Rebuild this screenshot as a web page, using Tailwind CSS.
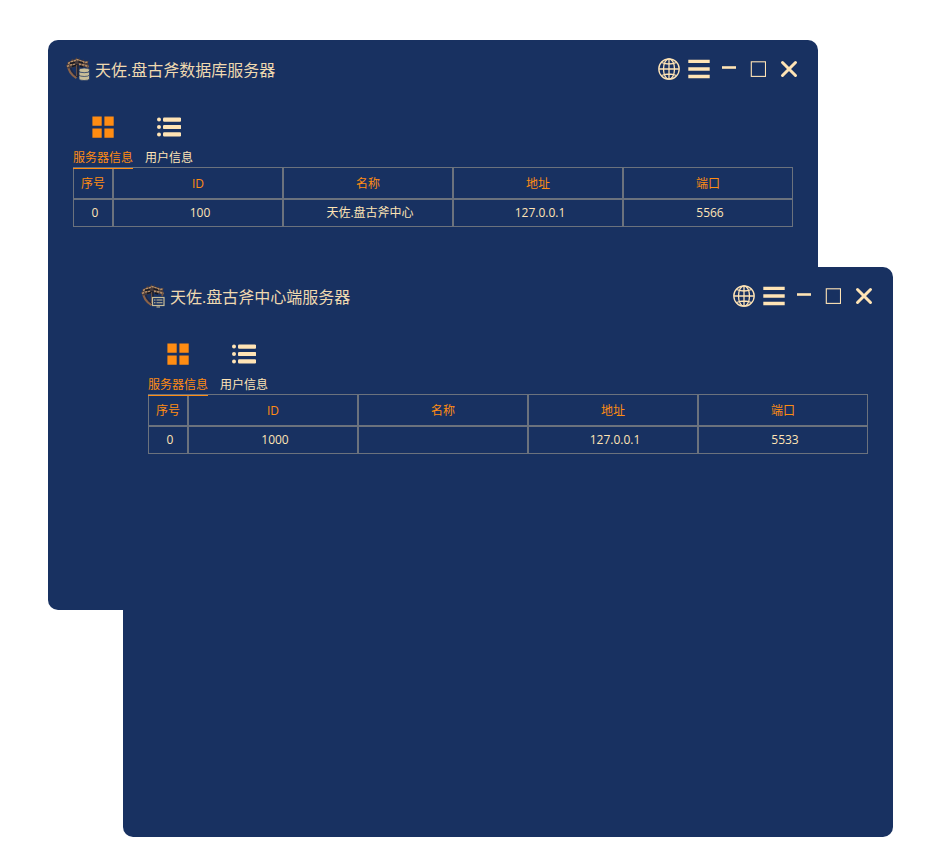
<!DOCTYPE html>
<html lang="zh-CN">
<head>
<meta charset="utf-8">
<title>天佐.盘古斧</title>
<script src="https://cdn.jsdelivr.net/npm/@tailwindcss/browser@4"></script>
</head>
<body class="relative h-[867px] w-[948px] overflow-hidden bg-white font-['Open_Sans','Noto_Sans_CJK_SC',sans-serif] text-xs text-[#ffe4b5]">

<svg class="hidden">
  <symbol id="emblem" viewBox="0 0 24 24">
    <path d="M2 8Q2.500 16.500 10.500 21" fill="none" stroke="#8b6247" stroke-width="2.200"/>
    <path d="M4 8Q5 15 10.500 19" fill="none" stroke="#24263c" stroke-width="1.300"/>
    <path d="M20.500 6Q22.500 9 21 12" fill="none" stroke="#6d5041" stroke-width="1.800"/>
    <path d="M0 9L2.500 4.500 5 4 6 1.500 8.500 3 10.500 0 11.500 2.500 13.500 1 15 3.500 17.500 2.500 19 5 23 3.500 21.500 7 23.500 9.500 18 10 15 9.500 12.500 8 9 10 6 10.500 2 11.500Z" fill="#463a3c"/>
    <path d="M2 6.500L5 4.800 8 4 11 2.500 15 4 19 5.500 21.500 5" fill="none" stroke="#b99067" stroke-width="1.500" stroke-dasharray="2.400 .7"/>
    <path d="M1 9.500L4 8 9 7.200M13 7.200L18 8 22.500 9.500" fill="none" stroke="#b18b66" stroke-width="1.700" stroke-dasharray="2.400 .7"/>
    <path d="M4 6.500L9 5.500M12.500 4.800L17 6M6 9.500L11 8M14 9L17 10" fill="none" stroke="#171821" stroke-width="1.400"/>
    <path d="M11.500 7V20" stroke="#22222e" stroke-width="2.400"/>
    <path d="M10.600 8V19" stroke="#80614e" stroke-width=".8"/>
  </symbol>
  <symbol id="globe" viewBox="0 0 22 22">
    <g fill="none" stroke="#ffe4b5" stroke-width="1.300"><circle cx="11" cy="11" r="10.200"/><ellipse cx="11" cy="11" rx="5.500" ry="10.200"/><path d="M11 1V21M1 11H21M3.500 4.500Q11 7.500 18.500 4.500M3.500 17.500Q11 14.500 18.500 17.500"/></g>
  </symbol>
  <symbol id="menu" viewBox="0 0 22 20"><path d="M.3 2.300H21.700M.3 10H21.700M.3 17.500H21.700" stroke="#ffe4b5" stroke-width="3.300"/></symbol>
  <symbol id="minus" viewBox="0 0 14 3"><path d="M0 1.500H14" stroke="#ffe4b5" stroke-width="2.600"/></symbol>
  <symbol id="square" viewBox="0 0 16 16"><rect x="1.300" y=".8" width="14.200" height="14.600" fill="none" stroke="#ffe4b5" stroke-width="1.100"/></symbol>
  <symbol id="close" viewBox="0 0 18 18"><path d="M2.500 2.500L15.500 15.500M15.500 2.500L2.500 15.500" stroke="#ffe4b5" stroke-width="3" stroke-linecap="round"/></symbol>
  <symbol id="grid" viewBox="0 0 22 22"><path d="M.4.400H9.700V9.700H.4ZM12.400.400H21.700V9.700H12.400ZM.4 12.400H9.700V21.700H.4ZM12.400 12.400H21.700V21.700H12.400Z" fill="#ff8c12"/></symbol>
  <symbol id="list" viewBox="0 0 24 20">
    <g fill="#ffe4b5"><circle cx="2" cy="2.500" r="2"/><circle cx="2" cy="10" r="2"/><circle cx="2" cy="17.500" r="2"/><rect x="6" y=".5" width="18.200" height="4.200" rx="1.200"/><rect x="6" y="7.900" width="18.200" height="4.200" rx="1.200"/><rect x="6" y="15.300" width="18.200" height="4.200" rx="1.200"/></g>
  </symbol>
</svg>

<section class="absolute left-12 top-10 h-[570px] w-[770px] rounded-[10px] bg-[#183161]">
  <header class="flex h-[58px] items-center pl-[18px] pr-5">
    <svg class="h-6 w-6 shrink-0"><use href="#emblem"/><g fill="#c9bd98" stroke="#183161" stroke-width=".7"><path d="M13 18.500H23.500V22Q22.500 23.500 18.200 23.500T13 22Z"/><path d="M13 15H23.500V18Q22.500 19.500 18.200 19.500T13 18Z"/><path d="M13 12.500Q14 11 18.200 11T23.500 12.500V14Q22.500 15.700 18.200 15.700T13 14Z"/></g></svg>
    <h1 class="ml-[5px] whitespace-nowrap pt-0.5 text-base leading-6 text-[#efd9b0]">天佐.盘古斧数据库服务器</h1>
    <div class="ml-auto flex items-center">
      <svg class="h-[22px] w-[22px]"><use href="#globe"/></svg>
      <svg class="ml-2 h-5 w-[22px]"><use href="#menu"/></svg>
      <svg class="mb-1 ml-3 h-[3px] w-3.5"><use href="#minus"/></svg>
      <svg class="ml-[14px] h-4 w-4"><use href="#square"/></svg>
      <svg class="ml-[14px] h-[18px] w-[18px]"><use href="#close"/></svg>
    </div>
  </header>
  <nav class="flex h-[69px] gap-3 pl-[25px] pt-[18px]">
    <div class="flex w-[60px] flex-col items-center text-[#ff8c12]"><svg class="h-[22px] w-[22px] shrink-0"><use href="#grid"/></svg><span class="mt-[11px] leading-[18px]">服务器信息</span></div>
    <div class="flex w-12 flex-col items-center"><svg class="mt-px h-5 w-6 shrink-0"><use href="#list"/></svg><span class="mt-3 leading-[18px]">用户信息</span></div>
  </nav>
  <div class="relative ml-[25px] w-[720px] text-center">
    <div class="grid h-8 grid-cols-[40px_repeat(4,170px)] leading-8 text-[#ff8c12] *:h-8 *:border *:border-[#6b727d]"><div>序号</div><div>ID</div><div>名称</div><div>地址</div><div>端口</div></div>
    <div class="grid h-7 grid-cols-[40px_repeat(4,170px)] leading-[26px] *:border *:border-[#6b727d] *:pl-1"><div>0</div><div>100</div><div>天佐.盘古斧中心</div><div>127.0.0.1</div><div>5566</div></div>
    <div class="absolute left-0 top-px h-px w-[60px] bg-[#ff8c12]"></div>
  </div>
</section>

<section class="absolute left-[123px] top-[267px] h-[570px] w-[770px] rounded-r-[10px] rounded-bl-[10px] bg-[#183161]">
  <header class="flex h-[58px] items-center pl-[18px] pr-5">
    <svg class="h-6 w-6 shrink-0"><use href="#emblem"/><rect x="11.500" y="13.500" width="11.500" height="8" fill="#183161" stroke="#c9bd98" stroke-width="1.200"/><path d="M13 16H14.500M15.500 16H21.500M13 18.700H14.500M15.500 18.700H21.500M15.500 23H19" stroke="#c9bd98" stroke-width="1.100"/></svg>
    <h1 class="ml-[5px] whitespace-nowrap pt-0.5 text-base leading-6 text-[#efd9b0]">天佐.盘古斧中心端服务器</h1>
    <div class="ml-auto flex items-center">
      <svg class="h-[22px] w-[22px]"><use href="#globe"/></svg>
      <svg class="ml-2 h-5 w-[22px]"><use href="#menu"/></svg>
      <svg class="mb-1 ml-3 h-[3px] w-3.5"><use href="#minus"/></svg>
      <svg class="ml-[14px] h-4 w-4"><use href="#square"/></svg>
      <svg class="ml-[14px] h-[18px] w-[18px]"><use href="#close"/></svg>
    </div>
  </header>
  <nav class="flex h-[69px] gap-3 pl-[25px] pt-[18px]">
    <div class="flex w-[60px] flex-col items-center text-[#ff8c12]"><svg class="h-[22px] w-[22px] shrink-0"><use href="#grid"/></svg><span class="mt-[11px] leading-[18px]">服务器信息</span></div>
    <div class="flex w-12 flex-col items-center"><svg class="mt-px h-5 w-6 shrink-0"><use href="#list"/></svg><span class="mt-3 leading-[18px]">用户信息</span></div>
  </nav>
  <div class="relative ml-[25px] w-[720px] text-center">
    <div class="grid h-8 grid-cols-[40px_repeat(4,170px)] leading-8 text-[#ff8c12] *:h-8 *:border *:border-[#6b727d]"><div>序号</div><div>ID</div><div>名称</div><div>地址</div><div>端口</div></div>
    <div class="grid h-7 grid-cols-[40px_repeat(4,170px)] leading-[26px] *:border *:border-[#6b727d] *:pl-1"><div>0</div><div>1000</div><div></div><div>127.0.0.1</div><div>5533</div></div>
    <div class="absolute left-0 top-px h-px w-[60px] bg-[#ff8c12]"></div>
  </div>
</section>
</body>
</html>
